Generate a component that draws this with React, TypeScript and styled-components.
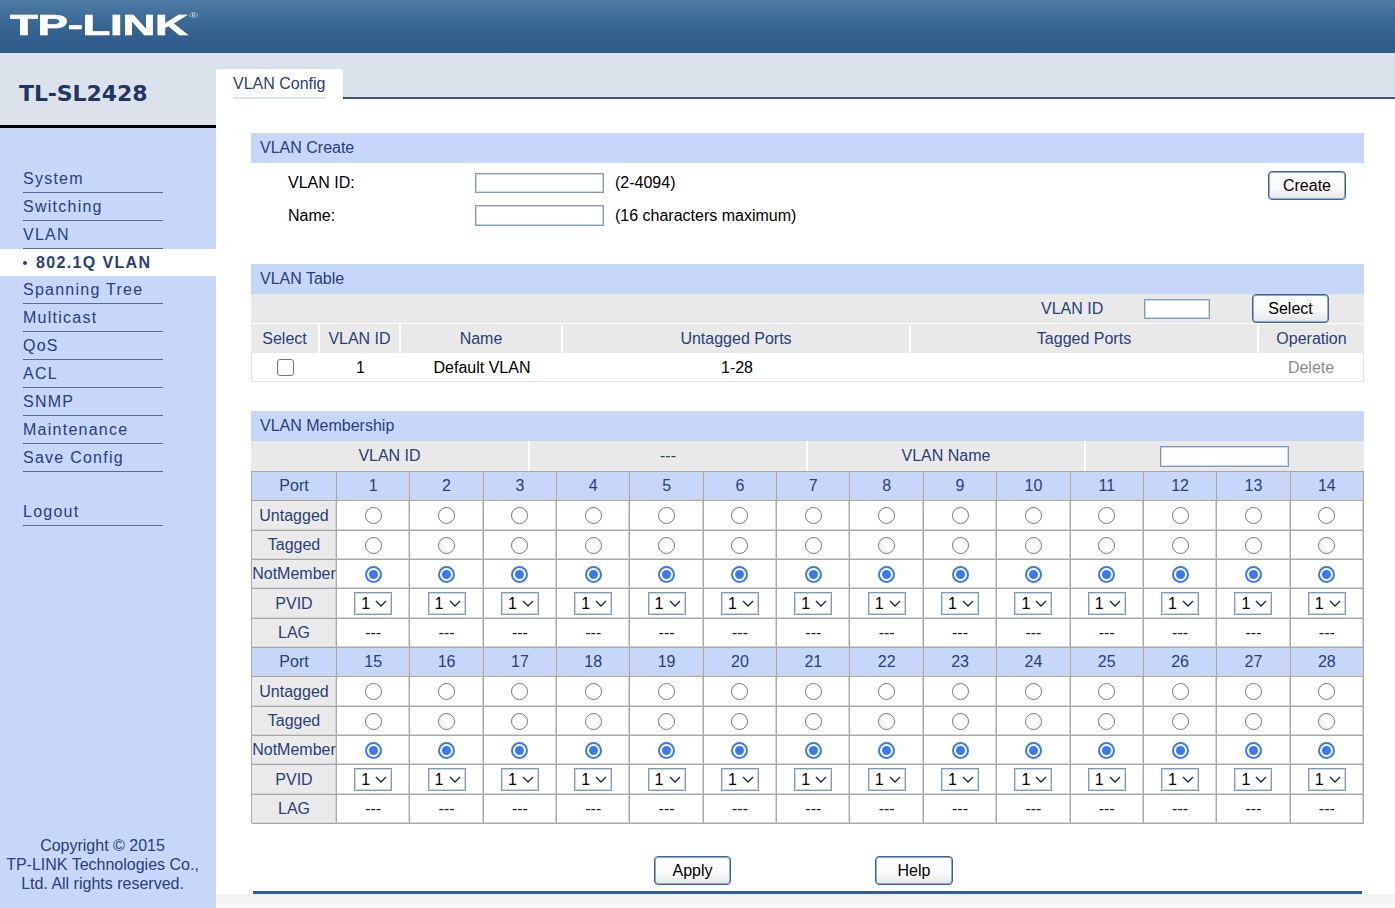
import React from "react";
import styled, { createGlobalStyle } from "styled-components";

const Global = createGlobalStyle`
  html, body { margin: 0; padding: 0; height: 100%; background: #fff; }
  body { font-family: "Liberation Sans", Arial, sans-serif; font-size: 16px; color: #000; overflow: hidden; }
  * { box-sizing: border-box; }
`;

const NAVY = "#2a4078";

const Page = styled.div`
  width: 100%;
  height: 100vh;
  display: flex;
  flex-direction: column;
`;
const Header = styled.header`
  height: 53px;
  flex: none;
  padding: 8px 0 0 10px;
  background: linear-gradient(#4f7ca4 0%, #3f6e9a 30%, #33608e 65%, #305c8b 100%);
  overflow: hidden;
`;
const Logo = styled.div`
  display: inline-block;
  transform: scaleX(1.52);
  transform-origin: left top;
  font-size: 30px;
  line-height: 34px;
  font-weight: 700;
  color: #fff;
  letter-spacing: -0.2px;
  white-space: nowrap;
  -webkit-text-stroke: 0.7px #fff;
  filter: blur(0.4px);
`;
const LogoMark = styled.sup`
  font-size: 8px;
  font-weight: 400;
  color: #d3deea;
  vertical-align: 17px;
  line-height: 0;
  margin-left: 1px;
  -webkit-text-stroke: 0;
`;
const Body = styled.div`
  flex: 1;
  display: flex;
  min-height: 0;
`;
const Sidebar = styled.aside`
  width: 216px;
  flex: none;
  display: flex;
  flex-direction: column;
  background: #c6d7fa;
`;
const Model = styled.div`
  height: 75px;
  flex: none;
  padding: 26px 0 0 19px;
  background: #dce2ec;
  border-bottom: 3px solid #000;
  font-family: "DejaVu Sans", sans-serif;
  font-weight: 700;
  font-size: 22px;
  line-height: 30px;
  color: #1f3562;
  letter-spacing: -0.1px;
`;
const Nav = styled.nav`
  padding-top: 37px;
  display: flex;
  flex-direction: column;
`;
const NavItem = styled.div<{ $gap?: boolean }>`
  height: 28px;
  width: 140px;
  margin: ${(p) => (p.$gap ? "26px" : "0")} 0 0 23px;
  border-bottom: 1px solid #5a6a8e;
  color: ${NAVY};
  line-height: 27px;
  letter-spacing: 1.25px;
  font-size: 16px;
`;
const NavActive = styled.div`
  height: 27px;
  background: #fff;
  display: flex;
  align-items: center;
  padding-left: 23px;
  gap: 9px;
  color: ${NAVY};
  font-weight: 700;
  letter-spacing: 1.35px;
`;
const Bullet = styled.span`
  width: 4px;
  height: 4px;
  border-radius: 50%;
  background: ${NAVY};
`;
const Copyright = styled.div`
  margin-top: auto;
  padding-bottom: 15px;
  text-align: center;
  line-height: 19px;
  color: ${NAVY};
  padding-right: 11px;
  white-space: nowrap;
`;
const Main = styled.main`
  flex: 1;
  min-width: 0;
  display: flex;
  flex-direction: column;
`;
const TabBand = styled.div`
  height: 46px;
  flex: none;
  padding-top: 16px;
  background: #dce2ec;
  border-bottom: 2px solid #46566c;
  display: flex;
`;
const Tab = styled.div`
  width: 127px;
  height: 30px;
  padding: 0 17px;
  background: #fff;
  border-radius: 3px 3px 0 0;
  color: ${NAVY};
  line-height: 30px;
`;
const TabLabel = styled.div`
  height: 30px;
  white-space: nowrap;
  border-bottom: 2px solid #dfe3ea;
`;
const Content = styled.div`
  flex: 1;
  padding: 34px 31px 0 35px;
  display: flex;
  flex-direction: column;
`;
const SectionTitle = styled.div`
  height: 30px;
  padding-left: 9px;
  background: #c6d7fa;
  color: ${NAVY};
  line-height: 29px;
`;
const CreateBody = styled.div`
  height: 101px;
  padding: 9px 18px 0 37px;
  display: flex;
  justify-content: space-between;
  align-items: flex-start;
`;
const FormRows = styled.div`
  display: flex;
  flex-direction: column;
  gap: 12px;
`;
const FormRow = styled.div`
  display: flex;
  align-items: center;
  height: 21px;
`;
const FormLabel = styled.div`
  width: 187px;
`;
const TextBox = styled.div<{ $w: number; $h?: number; $shift?: number }>`
  width: ${(p) => p.$w}px;
  height: ${(p) => p.$h ?? 21}px;
  margin-right: ${(p) => p.$shift ?? 0}px;
  background: #fff;
  border: 1px solid #7f9abb;
  box-shadow: inset 0 0 0 1px #ccd7e5;
  flex: none;
`;
const Hint = styled.div`
  margin-left: 11px;
`;
const Btn = styled.button<{ $mt?: number; $w?: number }>`
  width: ${(p) => p.$w ?? 77}px;
  height: 29px;
  padding: 0;
  margin-top: ${(p) => p.$mt ?? 0}px;
  border: 1px solid #3f6494;
  box-shadow: inset 0 0 0 1px #8fa9c8;
  border-radius: 4px;
  background: linear-gradient(#fdfdfd, #fafafa 55%, #e6e6e6);
  font-family: "Liberation Sans", Arial, sans-serif;
  font-size: 16px;
  color: #000;
`;
const GrayRow = styled.div<{ $cols: string }>`
  display: grid;
  grid-template-columns: ${(p) => p.$cols};
  background: #e9e9e9;
`;
const GrayCell = styled.div<{ $h: number; $sep?: boolean }>`
  height: ${(p) => p.$h}px;
  display: flex;
  align-items: center;
  justify-content: center;
  color: ${NAVY};
  border-right: ${(p) => (p.$sep ? "2px solid #fff" : "0")};
  white-space: nowrap;
`;
const SelectBar = styled.div`
  height: 30px;
  padding-left: 790px;
  background: #e9e9e9;
  border-bottom: 1px solid #fff;
  display: flex;
  align-items: center;
  color: ${NAVY};
`;
const BarLabel = styled.div`
  width: 103px;
`;
const BarBtn = styled(Btn)`
  margin-left: 42px;
`;
const DataRow = styled.div<{ $cols: string }>`
  display: grid;
  grid-template-columns: ${(p) => p.$cols};
  height: 29px;
  padding-top: 1px;
  border: 1px solid #e4e4e4;
  border-top: 0;
  align-items: center;
  text-align: center;
`;
const DataCell = styled.div<{ $muted?: boolean }>`
  color: ${(p) => (p.$muted ? "#8c8c8c" : "#000")};
  display: flex;
  justify-content: center;
  align-items: center;
`;
const Check = styled.span`
  width: 17px;
  height: 17px;
  margin-right: 2px;
  border: 1px solid #767676;
  border-radius: 3px;
  background: #fff;
`;
const Spacer = styled.div<{ $h: number }>`
  height: ${(p) => p.$h}px;
  flex: none;
`;
const PortGrid = styled.div`
  display: grid;
  grid-template-columns: 85px repeat(14, 1fr);
  grid-auto-rows: 29.333px;
  border-top: 1px solid #a8a8a8;
  border-left: 1px solid #a8a8a8;
  height: 352px;
`;
const Cell = styled.div<{ $kind: "label" | "port" | "plain" }>`
  display: flex;
  align-items: center;
  justify-content: center;
  padding-top: 0.5px;
  border-right: 1px solid #a8a8a8;
  border-bottom: 1px solid #a8a8a8;
  box-shadow: inset -1px -1px 0 #d4d4d4;
  white-space: nowrap;
  background: ${(p) => (p.$kind === "port" ? "#c6d7fa" : p.$kind === "label" ? "#eaeaea" : "#fff")};
  color: ${(p) => (p.$kind === "plain" ? "#000" : NAVY)};
`;
const PortNum = styled(Cell)`
  color: ${NAVY};
`;
const Radio = styled.span<{ $on?: boolean }>`
  width: 17px;
  height: 17px;
  border-radius: 50%;
  background: #fff;
  border: ${(p) => (p.$on ? "2px solid #3b78f4" : "1px solid #767676")};
  display: flex;
  align-items: center;
  justify-content: center;
  &::after {
    content: "";
    display: ${(p) => (p.$on ? "block" : "none")};
    width: 9px;
    height: 9px;
    border-radius: 50%;
    background: #3b78f4;
  }
`;
const Pick = styled.div`
  width: 38px;
  height: 23px;
  border: 1px solid #7f9abb;
  box-shadow: inset 0 0 0 1px #ccd7e5;
  background: #fff;
  display: flex;
  align-items: center;
  justify-content: space-between;
  padding: 0 4px 0 6px;
`;
const Dashes = styled.span`
  font-size: 16px;
  color: #222;
`;
const Actions = styled.div`
  margin-top: 33px;
  padding-right: 8px;
  display: flex;
  justify-content: center;
  gap: 144px;
`;
const Rule = styled.div`
  height: 3px;
  margin: 6px 2px 0;
  background: #2f5f91;
  flex: none;
`;
const Tail = styled.div`
  flex: 1;
  background: linear-gradient(#f1f1f1, #fafafa);
  margin-right: -31px;
  margin-left: -35px;
`;

const navTop = ["System", "Switching", "VLAN"];
const navRest = ["Spanning Tree", "Multicast", "QoS", "ACL", "SNMP", "Maintenance", "Save Config"];
const headCols = "69px 81px 162px 348px 348px 1fr";
const dataCols = "68px 81px 162px 348px 348px 1fr";
const memberCols = "279px 278px 278px 1fr";

const Chevron = () => (
  <svg width="12" height="7" viewBox="0 0 12 7" fill="none">
    <path d="M1 1l5 5 5-5" stroke="#222" strokeWidth="1.3" />
  </svg>
);

function PortBlock({ start }: { start: number }) {
  const ports = Array.from({ length: 14 }, (_, i) => start + i);
  return (
    <>
      <Cell $kind="port">Port</Cell>
      {ports.map((n) => (
        <PortNum $kind="port" key={n}>{n}</PortNum>
      ))}
      {["Untagged", "Tagged", "NotMember"].map((label) => (
        <React.Fragment key={label}>
          <Cell $kind="label">{label}</Cell>
          {ports.map((n) => (
            <Cell $kind="plain" key={n}>
              <Radio $on={label === "NotMember"} />
            </Cell>
          ))}
        </React.Fragment>
      ))}
      <Cell $kind="label">PVID</Cell>
      {ports.map((n) => (
        <Cell $kind="plain" key={n}>
          <Pick>1<Chevron /></Pick>
        </Cell>
      ))}
      <Cell $kind="label">LAG</Cell>
      {ports.map((n) => (
        <Cell $kind="plain" key={n}>
          <Dashes>---</Dashes>
        </Cell>
      ))}
    </>
  );
}

export default function App() {
  return (
    <Page>
      <Global />
      <Header>
        <Logo>TP-LINK<LogoMark>®</LogoMark></Logo>
      </Header>
      <Body>
        <Sidebar>
          <Model>TL-SL2428</Model>
          <Nav>
            {navTop.map((n) => <NavItem key={n}>{n}</NavItem>)}
            <NavActive><Bullet />802.1Q VLAN</NavActive>
            {navRest.map((n) => <NavItem key={n}>{n}</NavItem>)}
            <NavItem $gap>Logout</NavItem>
          </Nav>
          <Copyright>
            Copyright © 2015<br />TP-LINK Technologies Co.,<br />Ltd. All rights reserved.
          </Copyright>
        </Sidebar>
        <Main>
          <TabBand>
            <Tab><TabLabel>VLAN Config</TabLabel></Tab>
          </TabBand>
          <Content>
            <SectionTitle>VLAN Create</SectionTitle>
            <CreateBody>
              <FormRows>
                <FormRow>
                  <FormLabel>VLAN ID:</FormLabel>
                  <TextBox $w={129} $h={20} />
                  <Hint>(2-4094)</Hint>
                </FormRow>
                <FormRow>
                  <FormLabel>Name:</FormLabel>
                  <TextBox $w={129} />
                  <Hint>(16 characters maximum)</Hint>
                </FormRow>
              </FormRows>
              <Btn $mt={-1} $w={78}>Create</Btn>
            </CreateBody>

            <SectionTitle>VLAN Table</SectionTitle>
            <SelectBar>
              <BarLabel>VLAN ID</BarLabel>
              <TextBox $w={66} $h={20} />
              <BarBtn>Select</BarBtn>
            </SelectBar>
            <GrayRow $cols={headCols}>
              <GrayCell $h={29} $sep>Select</GrayCell>
              <GrayCell $h={29} $sep>VLAN ID</GrayCell>
              <GrayCell $h={29} $sep>Name</GrayCell>
              <GrayCell $h={29} $sep>Untagged Ports</GrayCell>
              <GrayCell $h={29} $sep>Tagged Ports</GrayCell>
              <GrayCell $h={29}>Operation</GrayCell>
            </GrayRow>
            <DataRow $cols={dataCols}>
              <DataCell><Check /></DataCell>
              <DataCell>1</DataCell>
              <DataCell>Default VLAN</DataCell>
              <DataCell>1-28</DataCell>
              <DataCell />
              <DataCell $muted>Delete</DataCell>
            </DataRow>
            <Spacer $h={29} />

            <SectionTitle>VLAN Membership</SectionTitle>
            <GrayRow $cols={memberCols}>
              <GrayCell $h={30} $sep>VLAN ID</GrayCell>
              <GrayCell $h={30} $sep>---</GrayCell>
              <GrayCell $h={30} $sep>VLAN Name</GrayCell>
              <GrayCell $h={30}><TextBox $w={129} $h={21} $shift={2} /></GrayCell>
            </GrayRow>
            <PortGrid>
              <PortBlock start={1} />
              <PortBlock start={15} />
            </PortGrid>

            <Actions>
              <Btn>Apply</Btn>
              <Btn $w={78}>Help</Btn>
            </Actions>
            <Rule />
            <Tail />
          </Content>
        </Main>
      </Body>
    </Page>
  );
}
